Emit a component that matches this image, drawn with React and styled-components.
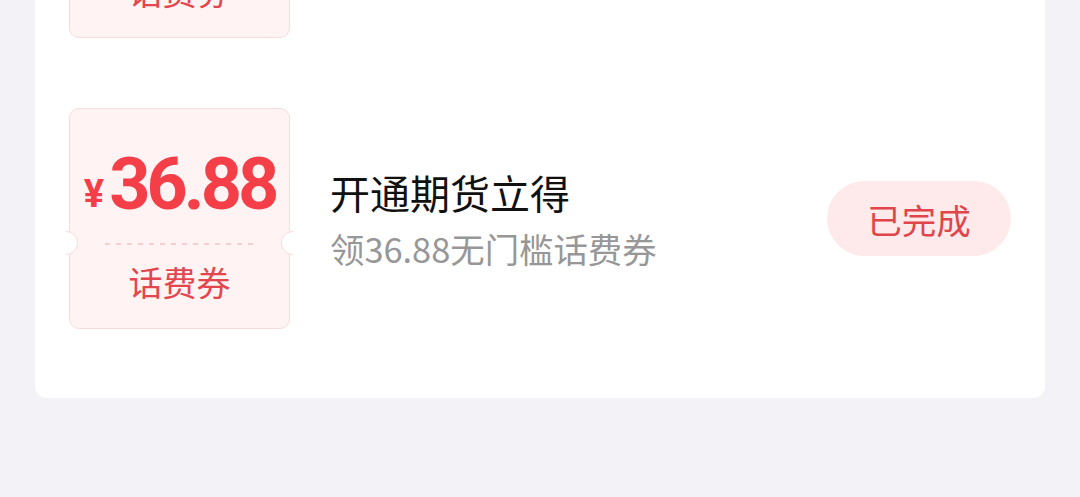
import React from "react";
import styled, { createGlobalStyle } from "styled-components";

const Global = createGlobalStyle`
  html, body { margin: 0; padding: 0; background: #f3f2f7; overflow: hidden; }
  body { font-family: "Noto Sans CJK SC", "Noto Sans", sans-serif; }
`;

const Page = styled.div`
  width: 1080px;
  height: 497px;
  padding: 0 35px;
  box-sizing: border-box;
  overflow: hidden;
`;

const Card = styled.div`
  margin-top: -183px;
  background: #ffffff;
  border-radius: 0 0 12px 12px;
  padding: 0 34px 69px;
  display: flex;
  flex-direction: column;
  gap: 70px;
`;

const Row = styled.div`
  display: flex;
  align-items: center;
`;

const Coupon = styled.div`
  position: relative;
  width: 221px;
  height: 221px;
  box-sizing: border-box;
  border: 1.5px solid #f8dcdc;
  border-radius: 10px;
  background: #fff3f3;
  display: flex;
  flex-direction: column;
  align-items: center;
  flex-shrink: 0;
`;

const Notch = styled.span`
  position: absolute;
  top: 122px;
  ${(p) => (p.$side === "left" ? "left: -16px;" : "right: -16px;")}
  width: 22px;
  height: 22px;
  border-radius: 50%;
  background: #ffffff;
  border: 1.5px solid transparent;
  border-top-color: #f8dcdc;
  border-right-color: #f8dcdc;
  transform: rotate(${(p) => (p.$side === "left" ? "45deg" : "225deg")});
`;

const Price = styled.div`
  margin-top: 40px;
  height: 72px;
  display: flex;
  align-items: baseline;
  color: #f43f48;
  font-family: Roboto, "Liberation Sans", sans-serif;
  font-weight: 700;
  line-height: 72px;
`;

const Yen = styled.span`
  font-size: 38px;
  margin-right: 5px;
  position: relative;
  top: -2px;
`;

const Amount = styled.span`
  font-size: 72px;
  letter-spacing: -4px;
`;

const Dashes = styled.div`
  margin-top: 22px;
  width: 150px;
  height: 2px;
  background: repeating-linear-gradient(
    to right,
    #f5cfd0 0 5px,
    transparent 5px 11px
  );
`;

const CouponLabel = styled.div`
  margin-top: 15px;
  font-size: 34px;
  line-height: 44px;
  color: #e4464d;
`;

const Info = styled.div`
  margin-left: 40px;
  flex: 1;
  display: flex;
  flex-direction: column;
`;

const Title = styled.div`
  font-size: 40px;
  line-height: 48px;
  color: #111111;
  margin-top: 0px;
`;

const Sub = styled.div`
  margin-top: 10px;
  font-size: 34.4px;
  line-height: 44px;
  color: #979797;
`;

const Status = styled.button`
  width: 184px;
  height: 75px;
  border: none;
  border-radius: 38px;
  background: #feeaea;
  color: #e0454b;
  font-family: "Noto Sans CJK SC", sans-serif;
  font-size: 34.5px;
  padding: 0;
  flex-shrink: 0;
`;

const tasks = [
  { amount: "20.00", title: "开通账户立得", sub: "领20.00无门槛话费券" },
  { amount: "36.88", title: "开通期货立得", sub: "领36.88无门槛话费券" },
];

export default function App() {
  return (
    <>
      <Global />
      <Page>
        <Card>
          {tasks.map((t) => (
            <Row key={t.amount}>
              <Coupon>
                <Notch $side="left" />
                <Notch $side="right" />
                <Price>
                  <Yen>¥</Yen>
                  <Amount>{t.amount}</Amount>
                </Price>
                <Dashes />
                <CouponLabel>话费券</CouponLabel>
              </Coupon>
              <Info>
                <Title>{t.title}</Title>
                <Sub>{t.sub}</Sub>
              </Info>
              <Status>已完成</Status>
            </Row>
          ))}
        </Card>
      </Page>
    </>
  );
}
